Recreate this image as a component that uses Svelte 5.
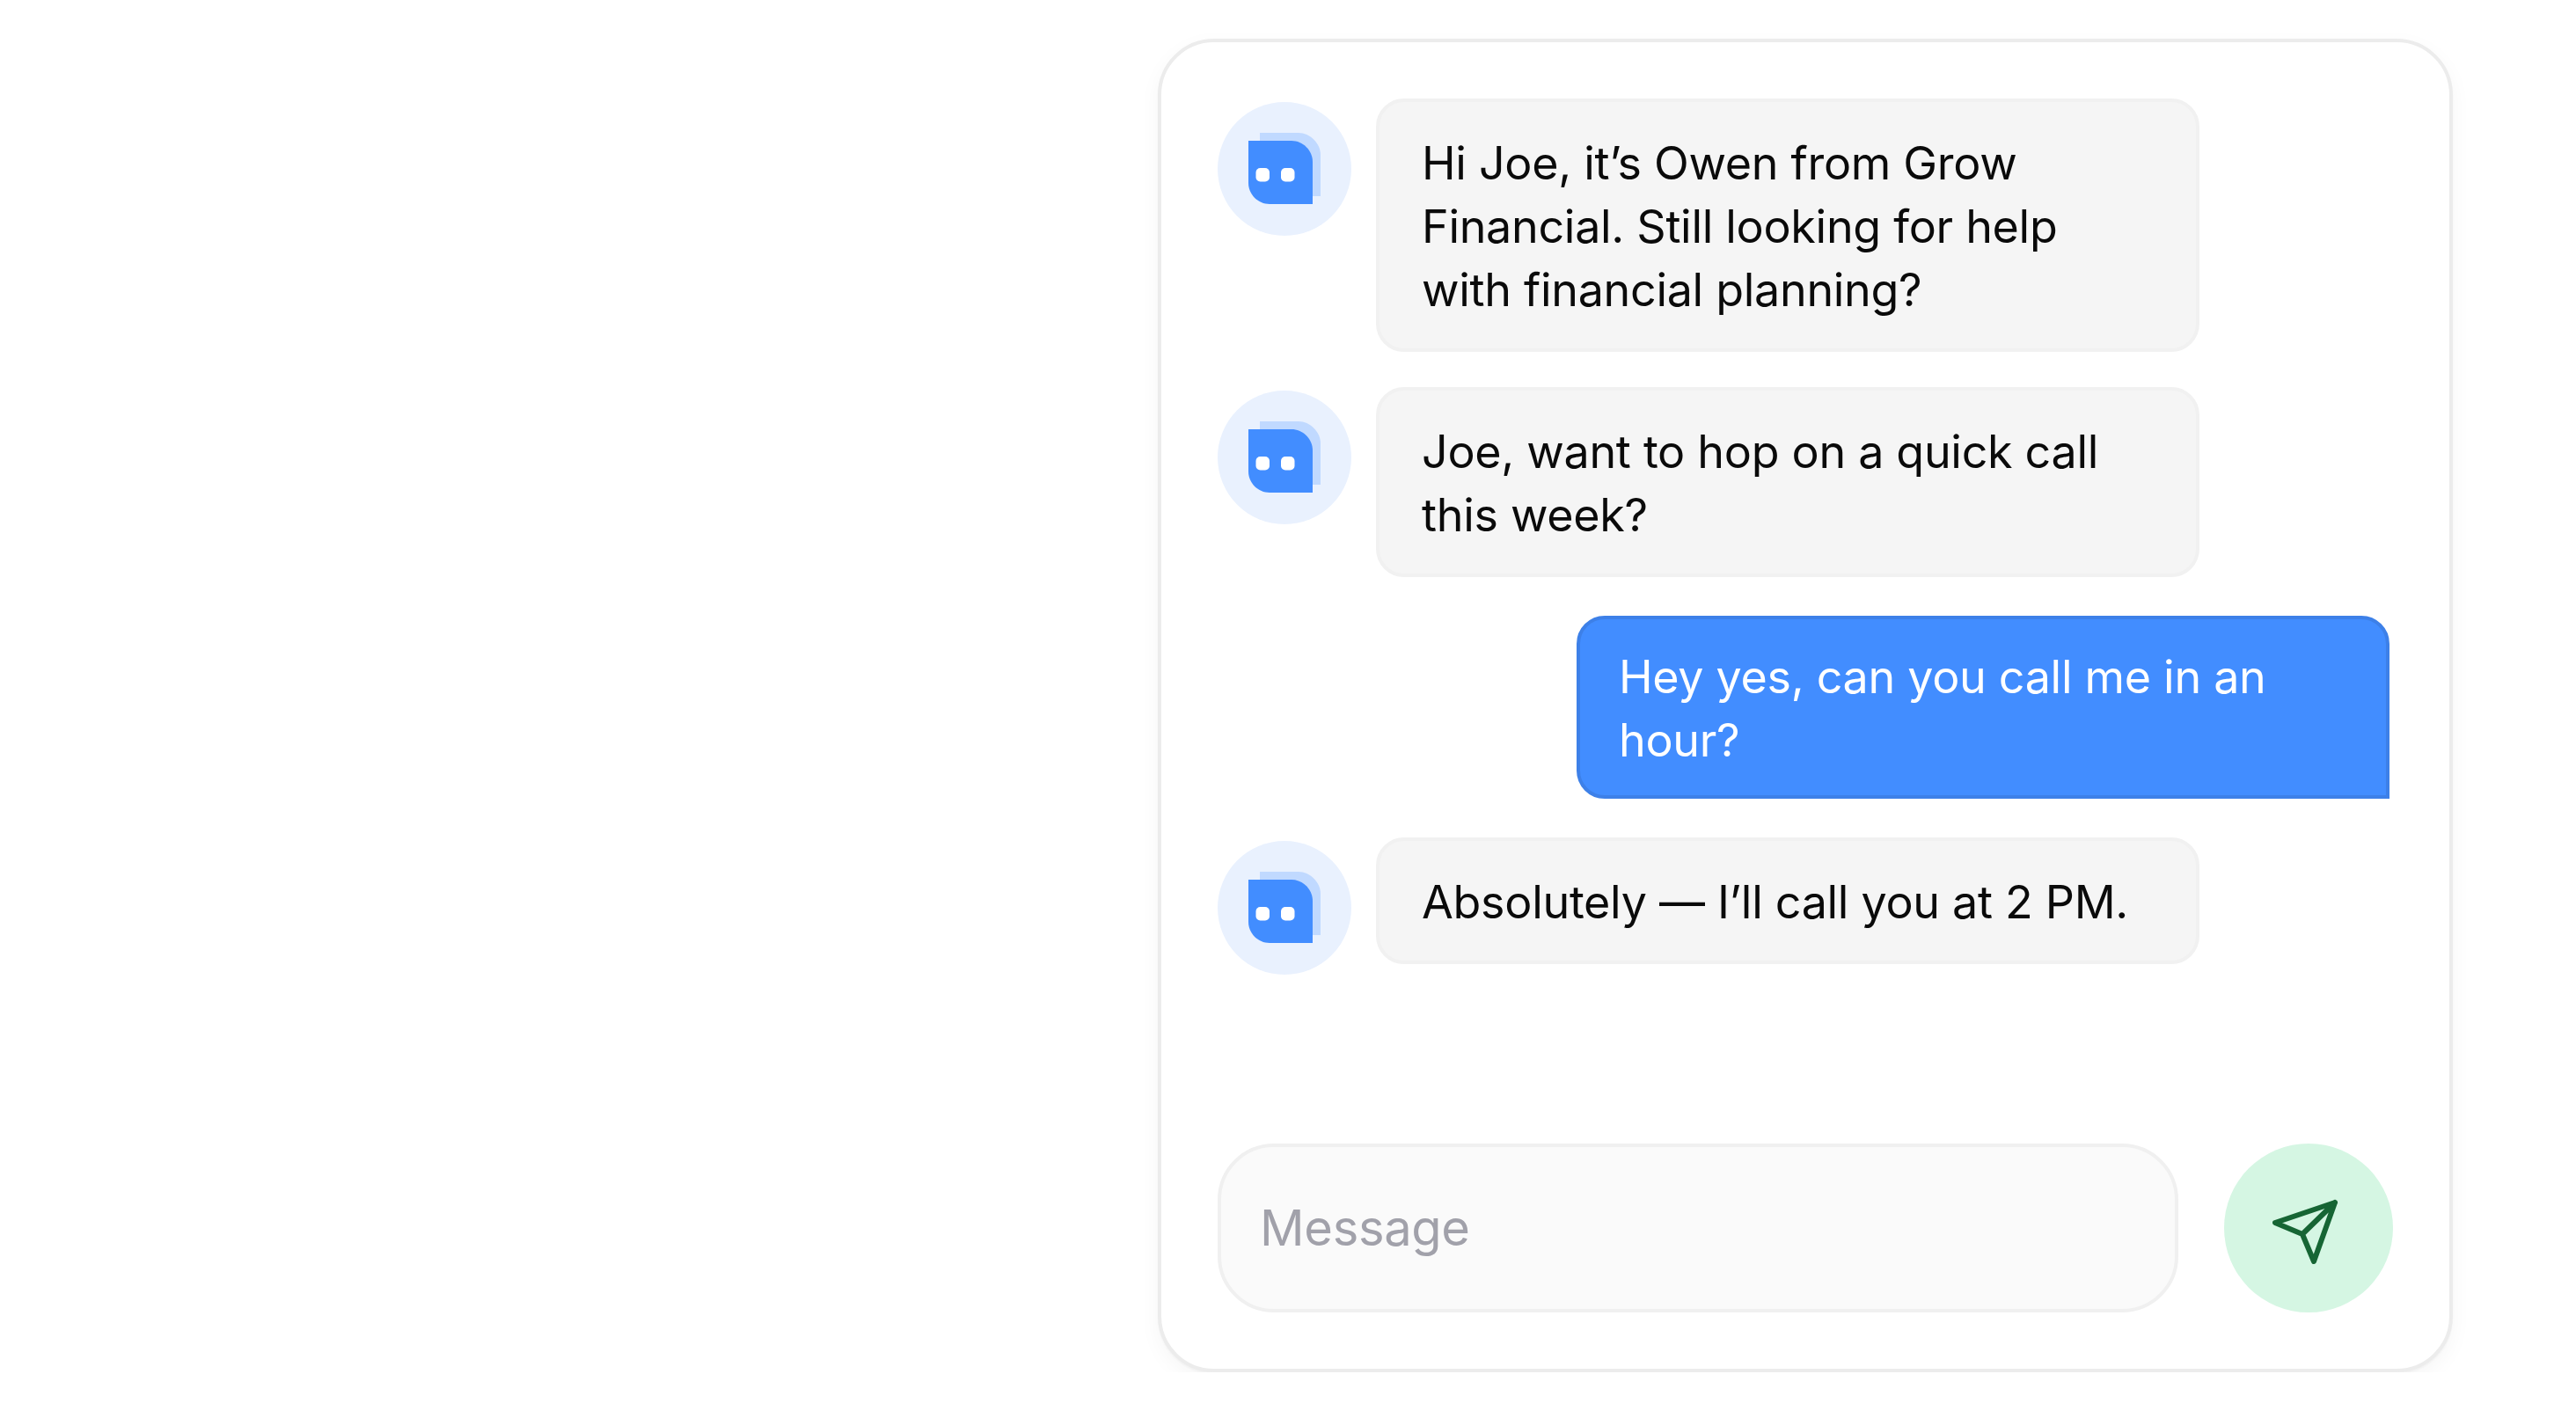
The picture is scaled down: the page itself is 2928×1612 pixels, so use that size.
<script>
  const messages = [
    { from: "bot", text: "Hi Joe, it’s Owen from Grow Financial. Still looking for help with financial planning?" },
    { from: "bot", text: "Joe, want to hop on a quick call this week?" },
    { from: "me", text: "Hey yes, can you call me in an hour?" },
    { from: "bot", text: "Absolutely — I’ll call you at 2 PM." }
  ];
</script>

<div class="page">
  <section class="card">
    <div class="list">
      {#each messages as msg}
        {#if msg.from === "bot"}
          <div class="row">
            <div class="avatar">
              <svg width="84" height="84" viewBox="0 0 84 84">
                <path d="M14 1H58C71 1 83 13 83 26V73H14Z" fill="#c0d9ff" />
                <path d="M1 10H50C63 10 74 21 74 34V82H25C12 82 1 71 1 58Z" fill="#428dff" />
                <rect x="9.500" y="41" width="15.500" height="15.500" rx="5" fill="#fff" />
                <rect x="38" y="41" width="15.500" height="15.500" rx="5" fill="#fff" />
              </svg>
            </div>
            <div class="bubble">{msg.text}</div>
          </div>
        {:else}
          <div class="row mine">
            <div class="bubble own">{msg.text}</div>
          </div>
        {/if}
      {/each}
    </div>

    <form class="composer">
      <input type="text" placeholder="Message" />
      <button type="button" class="send" aria-label="Send">
        <svg width="192" height="192" viewBox="0 0 192 192">
          <path
            d="M126 67L58 90L89 103L102 134Z M126 67L89 103"
            fill="none"
            stroke="#166534"
            stroke-width="6"
            stroke-linejoin="round"
            stroke-linecap="round" />
        </svg>
      </button>
    </form>
  </section>
</div>

<style>
  :global(body) {
    margin: 0;
    background: #fff;
  }
  .page {
    padding: 44px 0 0 1316px;
    font-family: Inter, "Liberation Sans", sans-serif;
  }
  .card {
    box-sizing: border-box;
    width: 1472px;
    height: 1516px;
    padding: 64px;
    border: 4px solid #ececec;
    border-radius: 64px;
    background: #fff;
    box-shadow: 0 2px 2px rgba(0, 0, 0, 0.03), 0 8px 24px rgba(0, 0, 0, 0.04);
    display: flex;
    flex-direction: column;
    justify-content: space-between;
  }
  .list {
    display: flex;
    flex-direction: column;
    gap: 40px;
  }
  .row {
    display: flex;
    gap: 28px;
    align-items: flex-start;
  }
  .mine {
    justify-content: flex-end;
    margin: 4px 4px 4px 0;
  }
  .avatar {
    flex: none;
    width: 152px;
    height: 152px;
    margin-top: 4px;
    border-radius: 50%;
    background: #e9f1fe;
    display: flex;
    align-items: center;
    justify-content: center;
  }
  .avatar svg {
    display: block;
  }
  .bubble {
    box-sizing: border-box;
    width: 936px;
    padding: 34px 48px 30px;
    border: 4px solid #f1f1f1;
    border-radius: 32px;
    background: #f5f5f5;
    color: #0a0a0a;
    font-size: 52px;
    line-height: 72px;
    letter-spacing: -0.3px;
  }
  .own {
    width: 924px;
    padding: 30px 44px 26px;
    border-color: #3d80e8;
    border-radius: 32px 32px 0 32px;
    background: #428dff;
    color: #fff;
  }
  .composer {
    display: flex;
    align-items: center;
    justify-content: space-between;
  }
  input {
    box-sizing: border-box;
    width: 1092px;
    height: 192px;
    padding: 0 44px;
    border: 4px solid #f0f0f0;
    border-radius: 64px;
    background: #fafafa;
    font-family: inherit;
    font-size: 56px;
    letter-spacing: -0.3px;
    color: #0a0a0a;
    outline: none;
  }
  input::placeholder {
    color: #a1a1aa;
    opacity: 1;
  }
  .send {
    flex: none;
    width: 192px;
    height: 192px;
    padding: 0;
    border: 0;
    border-radius: 50%;
    background: #d5f6e3;
  }
  .send svg {
    display: block;
  }
</style>
